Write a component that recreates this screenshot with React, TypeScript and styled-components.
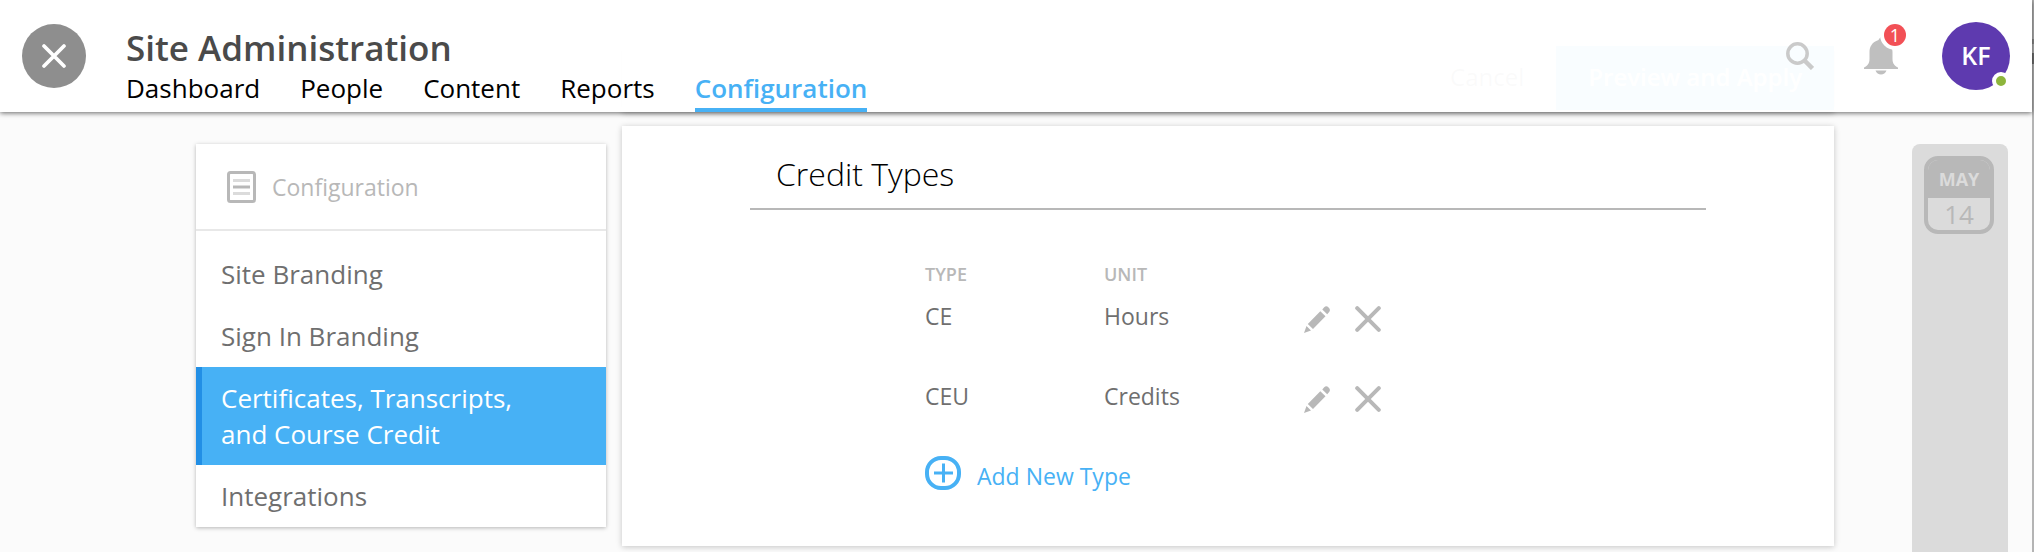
import React from "react";
import styled, { createGlobalStyle } from "styled-components";

const GlobalStyle = createGlobalStyle`
  *, *::before, *::after { box-sizing: border-box; }
  body {
    margin: 0;
    background: #fbfbfb;
    color: #6f6f6f;
    font-family: "Open Sans", "Noto Sans", sans-serif;
  }
  h1, h2, p, ul { margin: 0; padding: 0; }
  ul { list-style: none; }
  a { color: inherit; text-decoration: none; }
  button { border: 0; padding: 0; background: none; font: inherit; color: inherit; cursor: pointer; }
  svg { display: block; }
`;

const Page = styled.div`
  display: flex;
  flex-direction: column;
  min-height: 100vh;
  padding-right: 2px;
  background: linear-gradient(
      #b4b4b4 39px,
      #8c8c8c 39px 44px,
      #b4b4b4 44px 53px,
      #707070 53px 64px,
      #b4b4b4 64px
    )
    right top / 2px 100% no-repeat;
`;

const Header = styled.header`
  position: sticky;
  top: 0;
  z-index: 2;
  display: flex;
  height: 112px;
  padding: 0 22px;
  background: rgba(255, 255, 255, 0.97);
  box-shadow: 0 1px 5px rgba(0, 0, 0, 0.6);
`;

const CloseButton = styled.button`
  display: grid;
  place-items: center;
  width: 64px;
  height: 64px;
  margin-top: 24px;
  border-radius: 50%;
  background: #8e8e8e;
`;

const Heading = styled.div`
  display: flex;
  flex: 1;
  flex-direction: column;
  justify-content: flex-end;
  margin-left: 40px;
`;

const Title = styled.h1`
  color: #4a4a4a;
  font-size: 35px;
  font-weight: 600;
  line-height: 44px;
`;

const Nav = styled.nav`
  display: flex;
  gap: 40px;
`;

const NavLink = styled.a<{ $active?: boolean }>`
  height: 42px;
  border-bottom: 4px solid ${(p) => (p.$active ? "#47b1f5" : "transparent")};
  color: ${(p) => (p.$active ? "#47b1f5" : "#000")};
  font-size: 26px;
  font-weight: ${(p) => (p.$active ? 600 : 400)};
  line-height: 36px;
`;

const Tools = styled.div`
  display: flex;
  align-items: center;
`;

const SearchButton = styled.button`
  margin-right: 50px;
`;

const BellButton = styled.button`
  position: relative;
  margin-right: 44px;
`;

const Count = styled.span`
  position: absolute;
  top: -13px;
  right: -8px;
  width: 22px;
  height: 22px;
  border-radius: 50%;
  background: #f25056;
  box-shadow: 0 0 0 4px #fff;
  color: #fff;
  font-size: 18px;
  line-height: 22px;
  text-align: center;
`;

const Avatar = styled.button`
  position: relative;
  width: 68px;
  height: 68px;
  padding-bottom: 3px;
  border-radius: 50%;
  background: #5e3aaf;
  color: #fff;
  font-size: 25px;
  font-weight: 600;
`;

const Status = styled.span`
  position: absolute;
  right: 0;
  bottom: 0;
  width: 18px;
  height: 18px;
  border: 4px solid #fff;
  border-radius: 50%;
  background: #8db53c;
`;

const Body = styled.div`
  display: flex;
  flex: 1;
  margin-top: -68px;
  padding: 0 24px 0 196px;
`;

const Sidebar = styled.aside`
  align-self: flex-start;
  width: 410px;
  margin: 100px 16px 0 0;
  background: #fff;
  box-shadow: 0 1px 4px rgba(0, 0, 0, 0.28);
`;

const SidebarHead = styled.div`
  display: flex;
  align-items: center;
  gap: 16px;
  height: 87px;
  padding-left: 31px;
  border-bottom: 2px solid #e8e8e8;
  color: #b8b8b8;
  font-size: 23px;
`;

const SidebarList = styled.ul`
  padding-top: 12px;
`;

const SidebarLink = styled.a<{ $active?: boolean }>`
  display: block;
  padding: 13px 80px 13px 19px;
  border-left: 6px solid ${(p) => (p.$active ? "#228fe5" : "transparent")};
  background: ${(p) => (p.$active ? "#47b1f5" : "transparent")};
  color: ${(p) => (p.$active ? "#fff" : "#6f6f6f")};
  font-size: 26px;
  line-height: 36px;
`;

const Main = styled.main`
  flex: 1;
`;

const Card = styled.section`
  background: #fff;
  box-shadow: 0 1px 6px rgba(0, 0, 0, 0.22);
`;

const Toolbar = styled(Card)`
  display: flex;
  justify-content: flex-end;
  height: 68px;
  margin-bottom: 14px;
  padding: 2px 0;
  font-size: 24px;
`;

const ToolbarButton = styled.button<{ $primary?: boolean }>`
  padding: 0 32px 4px;
  background: ${(p) => (p.$primary ? "#47b1f5" : "transparent")};
  color: ${(p) => (p.$primary ? "#fff" : "#6f6f6f")};
  font-weight: ${(p) => (p.$primary ? 600 : 400)};
`;

const CreditCard = styled(Card)`
  padding: 20px 128px 50px;
`;

const CardTitle = styled.h2`
  height: 64px;
  padding-left: 26px;
  border-bottom: 2px solid #b8b8b8;
  color: #000;
  font-size: 32px;
  font-weight: 300;
  line-height: 56px;
`;

const Types = styled.div`
  padding: 50px 0 0 175px;
`;

const Table = styled.table`
  border-collapse: collapse;
  table-layout: fixed;
  width: 480px;

  th, td { padding: 0; text-align: left; vertical-align: top; }
  th {
    color: #b8b8b8;
    font-size: 18px;
    font-weight: 600;
    line-height: 28px;
  }
  td {
    height: 80px;
    font-size: 23px;
    line-height: 56px;
  }
`;

const RowActions = styled.div`
  display: flex;
  align-items: center;
  gap: 25px;
  height: 62px;
`;

const AddButton = styled.button`
  display: flex;
  align-items: flex-start;
  gap: 16px;
  margin-top: 8px;
  color: #47b1f5;
  font-size: 23px;
  line-height: 40px;
`;

const Dock = styled.aside`
  width: 96px;
  margin: 100px 0 0 78px;
  padding: 12px;
  border-radius: 8px 8px 0 0;
  background: #dbdbdb;
`;

const Calendar = styled.button`
  display: flex;
  flex-direction: column;
  width: 70px;
  height: 78px;
  overflow: hidden;
  border: 4px solid #b8b8b8;
  border-radius: 14px;
  color: #b8b8b8;
  text-align: center;
`;

const Month = styled.span`
  width: 100%;
  background: #b8b8b8;
  color: #dbdbdb;
  font-size: 18px;
  font-weight: 700;
  line-height: 38px;
`;

const Day = styled.span`
  width: 100%;
  font-size: 26px;
  line-height: 32px;
`;

const CloseIcon = ({ size, color, stroke }: { size: number; color: string; stroke: number }) => (
  <svg width={size} height={size} viewBox="0 0 26 26" stroke={color} strokeWidth={stroke} strokeLinecap="round">
    <path d="M2.2 2.2 23.8 23.8M23.8 2.2 2.2 23.8" />
  </svg>
);

const PencilIcon = () => (
  <svg width="26" height="27" viewBox="0 0 26 27" fill="#b8b8b8">
    <path d="M0 27 2.500 20 7 24.500ZM3.800 18 16.300 5.300 21.500 10.300 9 23ZM18.300 3.500 20.200 1.300Q22.300-.7 24.600 1.500T25.200 6L23.200 8.200Z" />
  </svg>
);

const SearchIcon = () => (
  <svg width="28" height="28" viewBox="0 0 28 28" fill="none" stroke="#cacaca">
    <circle cx="11.5" cy="11.5" r="9.7" strokeWidth="3.5" />
    <path d="M18.5 18.5 26.5 26.5" strokeWidth="4.5" />
  </svg>
);

const BellIcon = () => (
  <svg width="34" height="38" viewBox="0 0 34 38" fill="#bfbfbf">
    <path d="M17 0C18 0 18.700 2 19.500 3 26 5 28.500 10 28.500 15V22C28.500 27 31 29 34 30.500V32H0V30.500C3 29 5.500 27 5.500 22V15C5.500 10 8 5 14.500 3 15.300 2 16 0 17 0ZM11.500 33.500H22.500C21.500 36 19.500 37.500 17 37.500S12.500 36 11.500 33.500Z" />
  </svg>
);

const PageIcon = () => (
  <svg width="29" height="32" viewBox="0 0 29 32" fill="none">
    <rect x="1.500" y="1.500" width="26" height="29" rx="2" stroke="#b8b8b8" strokeWidth="3" />
    <path d="M6 9.500H23M6 22.500H23" stroke="#dbdbdb" strokeWidth="3" />
    <path d="M6 16H23" stroke="#b8b8b8" strokeWidth="3" />
  </svg>
);

const PlusIcon = () => (
  <svg width="36" height="34" viewBox="0 0 36 34" fill="none" stroke="#47b1f5">
    <rect x="2" y="2" width="32" height="30" rx="14" strokeWidth="4" />
    <path d="M9 17H28M18.500 7.500V26.500" strokeWidth="3" />
  </svg>
);

const navItems = ["Dashboard", "People", "Content", "Reports", "Configuration"];
const sections = ["Site Branding", "Sign In Branding", "Certificates, Transcripts, and Course Credit", "Integrations"];
const creditTypes = [
  { type: "CE", unit: "Hours" },
  { type: "CEU", unit: "Credits" },
];

export default function App() {
  return (
    <>
      <GlobalStyle />
      <Page>
        <Header>
          <CloseButton aria-label="Close">
            <CloseIcon size={24} color="#fff" stroke={4} />
          </CloseButton>
          <Heading>
            <Title>Site Administration</Title>
            <Nav>
              {navItems.map((item) => (
                <NavLink key={item} href="#" $active={item === "Configuration"}>
                  {item}
                </NavLink>
              ))}
            </Nav>
          </Heading>
          <Tools>
            <SearchButton aria-label="Search">
              <SearchIcon />
            </SearchButton>
            <BellButton aria-label="Notifications">
              <BellIcon />
              <Count>1</Count>
            </BellButton>
            <Avatar aria-label="Account">
              KF
              <Status />
            </Avatar>
          </Tools>
        </Header>
        <Body>
          <Sidebar>
            <SidebarHead>
              <PageIcon />
              Configuration
            </SidebarHead>
            <SidebarList>
              {sections.map((name) => (
                <li key={name}>
                  <SidebarLink href="#" $active={name.startsWith("Certificates")}>
                    {name}
                  </SidebarLink>
                </li>
              ))}
            </SidebarList>
          </Sidebar>
          <Main>
            <Toolbar>
              <ToolbarButton>Cancel</ToolbarButton>
              <ToolbarButton $primary>Preview and Apply</ToolbarButton>
            </Toolbar>
            <CreditCard>
              <CardTitle>Credit Types</CardTitle>
              <Types>
                <Table>
                  <colgroup>
                    <col width="179" />
                    <col width="200" />
                    <col />
                  </colgroup>
                  <thead>
                    <tr>
                      <th scope="col">TYPE</th>
                      <th scope="col">UNIT</th>
                      <th />
                    </tr>
                  </thead>
                  <tbody>
                    {creditTypes.map(({ type, unit }) => (
                      <tr key={type}>
                        <td>{type}</td>
                        <td>{unit}</td>
                        <td>
                          <RowActions>
                            <button aria-label={`Edit ${type}`}>
                              <PencilIcon />
                            </button>
                            <button aria-label={`Remove ${type}`}>
                              <CloseIcon size={26} color="#b8b8b8" stroke={4} />
                            </button>
                          </RowActions>
                        </td>
                      </tr>
                    ))}
                  </tbody>
                </Table>
                <AddButton>
                  <PlusIcon />
                  Add New Type
                </AddButton>
              </Types>
            </CreditCard>
          </Main>
          <Dock>
            <Calendar>
              <Month>MAY</Month>
              <Day>14</Day>
            </Calendar>
          </Dock>
        </Body>
      </Page>
    </>
  );
}
